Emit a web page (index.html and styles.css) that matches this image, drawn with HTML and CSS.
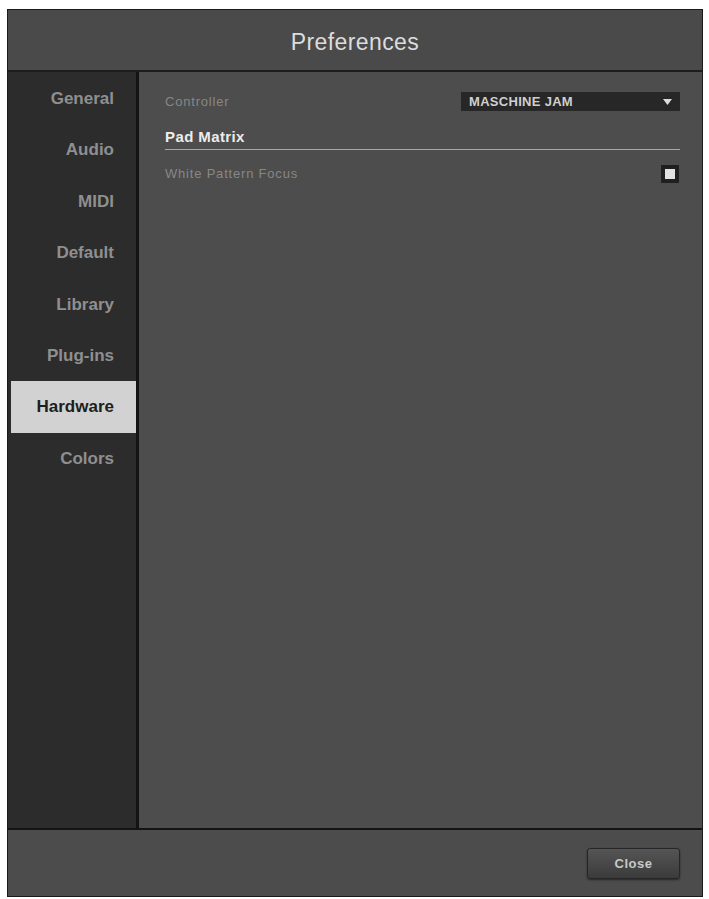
FILE: index.html
```html
<!DOCTYPE html>
<html lang="en">
<head>
  <meta charset="UTF-8">
  <title>Preferences</title>
  <link rel="stylesheet" href="styles.css">
</head>
<body>
  <div class="window">
    <div class="header">Preferences</div>
    <div class="main">
      <ul class="nav">
        <li>General</li>
        <li>Audio</li>
        <li>MIDI</li>
        <li>Default</li>
        <li>Library</li>
        <li>Plug-ins</li>
        <li class="active">Hardware</li>
        <li>Colors</li>
      </ul>
      <div class="content">
        <div class="row">
          <span class="label">Controller</span>
          <div class="select">
            <span>MASCHINE JAM</span>
            <svg width="9" height="6" viewBox="0 0 9 6"><path d="M0 0H9L4.5 6Z" fill="#ddd"/></svg>
          </div>
        </div>
        <div class="section">Pad Matrix</div>
        <div class="row">
          <span class="label">White Pattern Focus</span>
          <span class="check"></span>
        </div>
      </div>
    </div>
    <div class="footer">
      <button class="btn">Close</button>
    </div>
  </div>
</body>
</html>
```

FILE: styles.css
```css
body { margin: 0; background: #fff; font-family: "Liberation Sans", Arial, sans-serif; }
.window { margin: 9px 6px 0 7px; height: 888px; border: 1px solid #1a1a1a; display: flex; flex-direction: column; background: #4a4a4a; box-sizing: border-box; }
.header { height: 60px; border-bottom: 2px solid #1c1c1c; color: #dcdcdc; font-size: 23px; text-align: center; line-height: 64px; letter-spacing: 0.4px; background: #4a4a4a; }
.main { flex: 1; display: flex; }
.nav { list-style: none; margin: 0; padding: 1px 0 0 3px; width: 125px; background: #2c2c2c; border-right: 3px solid #141414; }
.nav li { height: 51.4px; line-height: 51px; text-align: right; padding-right: 22px; color: #8f8f8f; font-size: 17px; font-weight: bold; }
.nav li.active { background: #d2d2d2; color: #1e1e1e; }
.content { flex: 1; background: #4d4d4d; padding: 19px 22px 0 26px; }
.row { display: flex; justify-content: space-between; align-items: center; height: 21px; }
.label { color: #878787; font-size: 13px; letter-spacing: 0.8px; }
.select { width: 219px; height: 19px; background: #272727; display: flex; align-items: center; justify-content: space-between; padding: 0 8px; box-sizing: border-box; color: #cfcfcf; font-size: 13px; font-weight: bold; letter-spacing: 0.3px; }
.section { margin-top: 16px; margin-bottom: 13px; padding-bottom: 4px; border-bottom: 1px solid #a8a8a8; color: #ececec; font-size: 15px; font-weight: bold; letter-spacing: 0.4px; }
.check { width: 10px; height: 10px; background: #e2e2e2; border: 4px solid #202020; margin-right: 1px; }
.footer { height: 66px; border-top: 2px solid #141414; background: #4c4c4c; display: flex; justify-content: flex-end; align-items: center; padding: 0 22px 0 0; }
.btn { width: 93px; height: 31px; border: 1px solid #262626; border-radius: 3px; background: linear-gradient(#555, #3b3b3b); color: #c8c8c8; font-family: "Liberation Sans", Arial, sans-serif; font-size: 13px; font-weight: bold; letter-spacing: 0.5px; box-shadow: 0 1px 2px rgba(0,0,0,0.5); }
```
